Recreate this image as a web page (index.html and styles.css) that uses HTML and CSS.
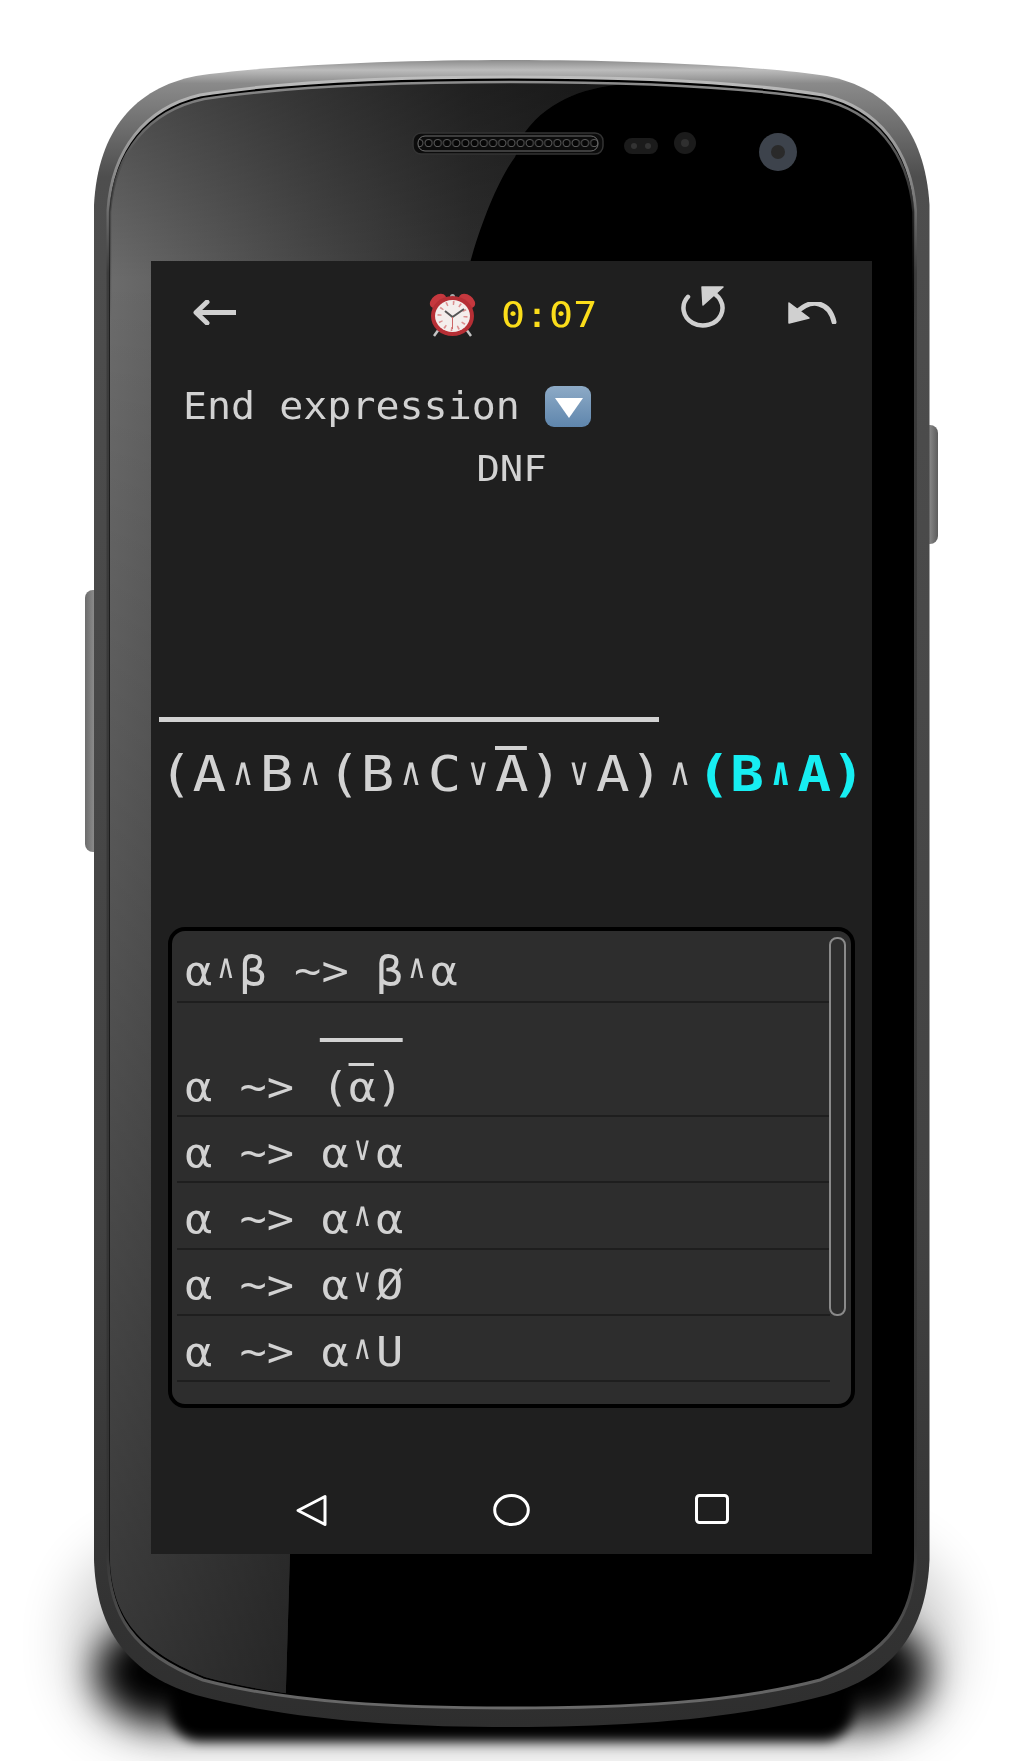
FILE: index.html
```html
<!DOCTYPE html>
<html lang="en">
<head>
    <meta charset="UTF-8">
    <meta name="viewport" content="width=device-width, initial-scale=1.0">
    <title>Logic Rewrite Game</title>
    <link rel="stylesheet" href="styles.css">
</head>
<body>
    <div class="phone">
        <!-- Device frame -->
        <svg class="frame" viewBox="0 0 1023 1761" aria-hidden="true">
            <defs>
                <filter id="blur-tight" x="-20%" y="-50%" width="140%" height="200%"><feGaussianBlur stdDeviation="6"/></filter>
                <filter id="blur-near" x="-20%" y="-50%" width="140%" height="200%"><feGaussianBlur stdDeviation="18"/></filter>
                <filter id="blur-far" x="-20%" y="-50%" width="140%" height="200%"><feGaussianBlur stdDeviation="26"/></filter>
                <linearGradient id="metal" x1="0" y1="60" x2="0" y2="1727" gradientUnits="userSpaceOnUse">
                    <stop offset="0" stop-color="#8c8c8c"/>
                    <stop offset="0.006" stop-color="#bcbcbc"/>
                    <stop offset="0.014" stop-color="#8a8a8a"/>
                    <stop offset="0.07" stop-color="#4e4e4e"/>
                    <stop offset="0.7" stop-color="#424242"/>
                    <stop offset="1" stop-color="#2e2e2e"/>
                </linearGradient>
                <linearGradient id="rim-outer" x1="0" y1="77" x2="0" y2="1708" gradientUnits="userSpaceOnUse">
                    <stop offset="0" stop-color="#bdbdbd"/>
                    <stop offset="0.06" stop-color="#8a8a8a"/>
                    <stop offset="0.12" stop-color="#3c3c3c"/>
                    <stop offset="0.9" stop-color="#333"/>
                    <stop offset="1" stop-color="#6a6a6a"/>
                </linearGradient>
                <linearGradient id="rim-inner" x1="0" y1="82" x2="0" y2="320" gradientUnits="userSpaceOnUse">
                    <stop offset="0" stop-color="#8c8c8c"/>
                    <stop offset="0.3" stop-color="#555"/>
                    <stop offset="1" stop-color="#111" stop-opacity="0"/>
                </linearGradient>
                <linearGradient id="gloss" x1="108" y1="0" x2="625" y2="0" gradientUnits="userSpaceOnUse">
                    <stop offset="0" stop-color="#6c6c6c"/>
                    <stop offset="0.4" stop-color="#474747"/>
                    <stop offset="0.7" stop-color="#2e2e2e"/>
                    <stop offset="1" stop-color="#202020"/>
                </linearGradient>
                <linearGradient id="gloss-shade" x1="0" y1="85" x2="0" y2="1700" gradientUnits="userSpaceOnUse">
                    <stop offset="0" stop-color="#000" stop-opacity="0.3"/>
                    <stop offset="0.12" stop-color="#000" stop-opacity="0"/>
                    <stop offset="1" stop-color="#000" stop-opacity="0.5"/>
                </linearGradient>
                <linearGradient id="key" x1="0" y1="0" x2="1" y2="0">
                    <stop offset="0" stop-color="#6c6c6c"/>
                    <stop offset="0.5" stop-color="#8e8e8e"/>
                    <stop offset="1" stop-color="#5c5c5c"/>
                </linearGradient>
                <clipPath id="glass">
                    <path d="M511.8 82C400 82 282 87 204 99C148 111 115 152 110 212V1560C112 1610 132 1648 205 1677C290 1700 400 1705 511.8 1705C623 1705 733 1700 818 1677C891 1648 911 1610 913.5 1560V212C908 152 875 111 819 99C741 87 623 82 511.8 82Z"/>
                </clipPath>
                <pattern id="holes" x="424" y="134" width="9.2" height="18" patternUnits="userSpaceOnUse">
                    <circle cx="4.6" cy="9" r="3.6" fill="#060606" stroke="#5a5a5a" stroke-width="1"/>
                </pattern>
            </defs>

            <rect x="70" y="1540" width="883" height="205" rx="90" fill="#000" opacity="0.18" filter="url(#blur-far)"/>
            <rect x="96" y="1620" width="831" height="104" rx="70" fill="#000" filter="url(#blur-near)"/>
            <rect x="170" y="1650" width="683" height="91" rx="30" fill="#000" filter="url(#blur-tight)"/>

            <rect x="85" y="590" width="20" height="262" rx="8" fill="url(#key)"/>
            <rect x="918" y="425" width="20" height="119" rx="8" fill="url(#key)"/>

            <path fill="url(#metal)" d="M511.8 60C400 60 270 65 196 76C135 88 98 130 94 205V1560C96 1620 120 1672 196 1695C290 1720 400 1727 511.8 1727C623 1727 733 1720 827 1695C903 1672 927 1620 929.5 1560V205C925 130 888 88 827 76C753 65 623 60 511.8 60Z"/>
            <path fill="#000" stroke="url(#rim-outer)" stroke-width="3" d="M511.8 77C400 77 280 82 200 95C145 108 112 150 108 210V1560C110 1612 130 1652 203 1680C290 1703 400 1708 511.8 1708C623 1708 733 1703 820 1680C893 1652 913 1612 915.5 1560V210C911 150 878 108 823 95C743 82 623 77 511.8 77Z"/>

            <g clip-path="url(#glass)">
                <path fill="url(#gloss)" d="M60 40H660L628 84C590 86 550 98 525 132L515 157C498 180 480 225 468 270L290 1554L285 1720H60Z"/>
                <path fill="url(#gloss-shade)" d="M60 40H660L628 84C590 86 550 98 525 132L515 157C498 180 480 225 468 270L290 1554L285 1720H60Z"/>
            </g>
            <path fill="none" stroke="url(#rim-inner)" stroke-width="2.5" d="M511.8 82C400 82 282 87 204 99C148 111 115 152 110 212V320M913.5 320V212C908 152 875 111 819 99C741 87 623 82 511.8 82"/>

            <!-- Speaker and sensors -->
            <rect x="413" y="133" width="190" height="21" rx="8" fill="#0c0c0c" stroke="#333" stroke-width="1.5"/>
            <rect x="418" y="136" width="180" height="15" rx="7" fill="url(#holes)" stroke="#6e6e6e" stroke-width="1"/>
            <rect x="624" y="138" width="34" height="16" rx="8" fill="#1b1b1b"/>
            <circle cx="634" cy="146" r="3" fill="#333"/>
            <circle cx="648" cy="146" r="3" fill="#333"/>
            <circle cx="685" cy="143" r="11" fill="#1b1b1b"/>
            <circle cx="685" cy="143" r="4" fill="#2f2f2f"/>
            <circle cx="778" cy="152" r="19" fill="#3d434c"/>
            <circle cx="778" cy="152" r="7" fill="#2a2a2a"/>
        </svg>

        <div class="screen">
            <!-- Top bar -->
            <div class="top-bar">
                <svg class="icon-back" viewBox="0 0 44 25">
                    <path d="M44 12.5H6" fill="none" stroke="#d0d0d0" stroke-width="5"/>
                    <path d="M15 2L4 12.5L15 23" fill="none" stroke="#d0d0d0" stroke-width="5" stroke-linecap="round" stroke-linejoin="round"/>
                </svg>
                <svg class="icon-clock" viewBox="0 0 49 44">
                    <line x1="11" y1="36" x2="6" y2="43" stroke="#c4c4c4" stroke-width="2.5"/>
                    <line x1="38" y1="36" x2="43" y2="43" stroke="#c4c4c4" stroke-width="2.5"/>
                    <circle cx="24.5" cy="3.5" r="2.5" fill="#aaa"/>
                    <ellipse cx="10" cy="8" rx="9" ry="6" fill="#c5383e" transform="rotate(-35 10 8)"/>
                    <ellipse cx="39" cy="8" rx="9" ry="6" fill="#c5383e" transform="rotate(35 39 8)"/>
                    <ellipse cx="24.5" cy="23" rx="21.5" ry="20" fill="#b62f35"/>
                    <ellipse cx="24.5" cy="23" rx="17.5" ry="16" fill="#f4eeec"/>
                    <circle cx="24.5" cy="23" r="13" fill="none" stroke="#dc8f8f" stroke-width="4" stroke-dasharray="1.6 5.2"/>
                    <path d="M17 18L24.5 24L36 16" fill="none" stroke="#555" stroke-width="2"/>
                    <line x1="24.5" y1="24" x2="24.5" y2="36" stroke="#c66" stroke-width="1"/>
                </svg>
                <div class="timer"><span class="timer-text">0:07</span></div>
                <svg class="icon-restart" viewBox="0 0 45 43">
                    <path d="M7 11.8A19.5 17.5 0 1 0 27 6.1" fill="none" stroke="#d0d0d0" stroke-width="4.5" stroke-linecap="round"/>
                    <path d="M21 2H42L22 20Z" fill="#d0d0d0" stroke="#d0d0d0" stroke-width="1.5" stroke-linejoin="round"/>
                </svg>
                <svg class="icon-undo" viewBox="0 0 49 22">
                    <path d="M8 11C16 3 24 0 31 2C39 4 44 11 46 20" fill="none" stroke="#d0d0d0" stroke-width="5" stroke-linecap="round"/>
                    <path d="M1 1V21L21 16Z" fill="#d0d0d0" stroke="#d0d0d0" stroke-width="1.5" stroke-linejoin="round"/>
                </svg>
            </div>

            <!-- Goal -->
            <div class="goal-row">
                <div class="goal-label"><span class="goal-text">End expression</span></div>
                <svg class="icon-down" viewBox="0 0 48 43">
                    <defs>
                        <linearGradient id="down-fill" x1="0" y1="0" x2="0" y2="1">
                            <stop offset="0" stop-color="#8daac6"/>
                            <stop offset="1" stop-color="#5f86ad"/>
                        </linearGradient>
                    </defs>
                    <rect x="1" y="1" width="46" height="41" rx="9" fill="url(#down-fill)"/>
                    <path d="M11 13H39L25 33Z" fill="#fff"/>
                </svg>
            </div>
            <div class="goal-form"><span>DNF</span></div>

            <!-- Current expression -->
            <div class="expression">
                <div class="expression-line"><span class="bar bar-outer">(A<span class="op">∧</span>B<span class="op">∧</span>(B<span class="op">∧</span>C<span class="op">∨</span><span class="bar bar-inner">A</span>)<span class="op">∨</span>A)</span><span class="op">∧</span><span class="selected">(B<span class="op">∧</span>A)</span></div>
            </div>

            <!-- Rule list -->
            <div class="rules">
                <div class="rule rule-first"><span class="rule-text">α<span class="op">∧</span>β ~&gt; β<span class="op">∧</span>α</span></div>
                <div class="rule rule-tall"><span class="rule-text">α ~&gt; <span class="bar bar-outer">(<span class="bar bar-inner">α</span>)</span></span></div>
                <div class="rule"><span class="rule-text">α ~&gt; α<span class="op">∨</span>α</span></div>
                <div class="rule"><span class="rule-text">α ~&gt; α<span class="op">∧</span>α</span></div>
                <div class="rule"><span class="rule-text">α ~&gt; α<span class="op">∨</span>Ø</span></div>
                <div class="rule"><span class="rule-text">α ~&gt; α<span class="op">∧</span>U</span></div>
                <div class="scrollbar"></div>
            </div>

            <!-- Android nav -->
            <div class="nav-bar">
                <svg class="nav-back" viewBox="0 0 33 33">
                    <path d="M30 2.5V30.5L3 16.5Z" fill="none" stroke="#fff" stroke-width="3" stroke-linejoin="round"/>
                </svg>
                <svg class="nav-home" viewBox="0 0 37 32">
                    <ellipse cx="18.5" cy="16" rx="16.8" ry="14.5" fill="none" stroke="#fff" stroke-width="3"/>
                </svg>
                <svg class="nav-recent" viewBox="0 0 34 30">
                    <rect x="1.5" y="1.5" width="31" height="27" rx="3" fill="none" stroke="#fff" stroke-width="3"/>
                </svg>
            </div>
        </div>
    </div>
</body>
</html>
```
FILE: styles.css
```css
body {
    margin: 0;
    background-color: #fff;
    font-family: "DejaVu Sans Mono", monospace;
    color: #d2d2d2;
}
.phone {
    position: relative;
    width: 1023px;
    height: 1761px;
    padding: 261px 0 0 151px;
    box-sizing: border-box;
    overflow: hidden;
}
.frame {
    position: absolute;
    left: 0;
    top: 0;
    width: 1023px;
    height: 1761px;
}
.screen {
    position: relative;
    width: 721px;
    height: 1293px;
    background-color: #1f1f1f;
}
.top-bar {
    display: flex;
    align-items: flex-start;
    height: 124px;
    padding-left: 41px;
    box-sizing: border-box;
}
.icon-back {
    width: 44px;
    height: 25px;
    margin-top: 39px;
}
.icon-clock {
    width: 49px;
    height: 44px;
    margin: 32px 0 0 192px;
}
.timer {
    width: 96px;
    margin: 32px 0 0 24px;
    font-size: 36px;
    line-height: 44px;
    color: #fbdd1a;
}
.timer-text {
    display: inline-block;
    transform: scaleX(1.11);
    transform-origin: left;
}
.icon-restart {
    width: 45px;
    height: 43px;
    margin: 24px 0 0 84px;
}
.icon-undo {
    width: 49px;
    height: 22px;
    margin: 41px 0 0 62px;
}
.goal-row {
    display: flex;
    align-items: flex-start;
    padding-left: 32px;
}
.goal-label {
    width: 361px;
    font-size: 37px;
    line-height: 44px;
}
.goal-text {
    display: inline-block;
    white-space: pre;
    transform: scaleX(1.08);
    transform-origin: left;
}
.icon-down {
    width: 48px;
    height: 43px;
}
.goal-form {
    margin-top: 18px;
    font-size: 36px;
    line-height: 44px;
    text-align: center;
}
.goal-form span {
    display: inline-block;
    transform: scaleX(1.08);
}
.expression {
    height: 210px;
    margin-top: 226px;
    padding: 28px 0 0 8px;
    box-sizing: border-box;
}
.expression-line {
    width: 620px;
    font-size: 49px;
    line-height: 60px;
    white-space: nowrap;
    transform: scaleX(1.139);
    transform-origin: left;
}
.expression .op {
    width: 29.5px;
    vertical-align: 6px;
}
.selected {
    font-weight: bold;
    color: #17eef2;
}
.op {
    display: inline-block;
    font-size: 30px;
    line-height: 1;
    text-align: center;
    transform: scaleY(1.3);
    transform-origin: 50% 85%;
}
.bar {
    position: relative;
}
.bar::before {
    content: "";
    position: absolute;
    left: 0;
    right: 0;
    background-color: #d2d2d2;
}
.expression .bar-outer::before {
    top: -29px;
    right: 4px;
    height: 5px;
}
.expression .bar-inner::before {
    top: 0;
    right: 2px;
    height: 4px;
}
.rules {
    position: relative;
    height: 481px;
    margin: 0 17px;
    padding: 0 21px 0 5px;
    box-sizing: border-box;
    border: 4px solid #000;
    border-radius: 17px;
    background-color: #2d2d2d;
}
.rule {
    display: flex;
    align-items: flex-end;
    height: 66.3px;
    padding: 0 0 5.5px 7.5px;
    box-sizing: border-box;
    border-bottom: 2px solid #1e1e1e;
}
.rule-first {
    height: 72px;
    padding-bottom: 7px;
}
.rule-tall {
    height: 114px;
}
.rule-text {
    display: block;
    font-size: 41px;
    line-height: 46px;
    white-space: pre;
    transform: scaleX(1.105);
    transform-origin: left;
}
.rule .op {
    width: 24.7px;
    font-size: 26px;
    font-weight: normal;
    vertical-align: 7px;
}
.rule .bar-outer::before {
    top: -25px;
    left: -1px;
    height: 4px;
}
.rule .bar-inner::before {
    top: 0;
    right: 2px;
    height: 3px;
}
.scrollbar {
    position: absolute;
    left: 657px;
    top: 6px;
    width: 17px;
    height: 379px;
    box-sizing: border-box;
    border: 2px solid #8a8a8a;
    border-radius: 8px;
}
.nav-bar {
    display: flex;
    gap: 165px;
    margin-top: 86px;
    padding-left: 144px;
}
.nav-back {
    width: 33px;
    height: 33px;
}
.nav-home {
    width: 37px;
    height: 32px;
}
.nav-recent {
    width: 34px;
    height: 30px;
}
```
